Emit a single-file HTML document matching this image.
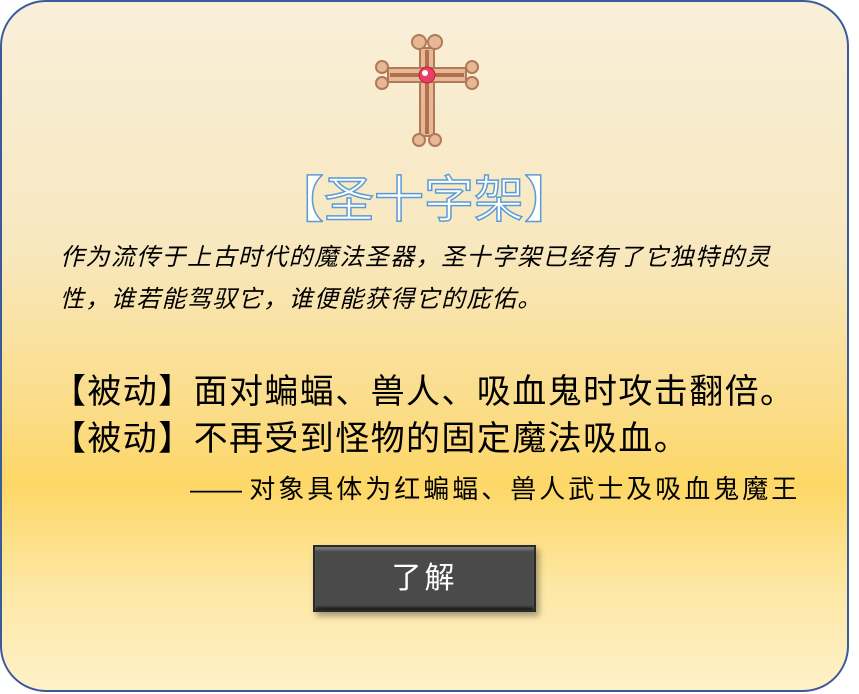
<!DOCTYPE html>
<html><head><meta charset="utf-8"><style>
body{margin:0;width:859px;height:694px;background:#fff;overflow:hidden;font-family:"Liberation Sans","Noto Sans CJK SC",sans-serif}
.panel{position:absolute;left:0;top:0;width:845px;height:688px;border:2px solid #3a5a9a;border-radius:46px;
background:linear-gradient(180deg,#f9efd9 0%,#f8e8c0 35%,#fbdc86 60%,#fdd766 70%,#fde7a4 85%,#fff1c8 100%);overflow:hidden}
.t{position:absolute;white-space:nowrap;color:#000}
.title{left:272px;top:158px;font-size:50px;color:#fff;-webkit-text-stroke:1.5px #5b9bd5;letter-spacing:0px}
.desc{left:58px;font-size:24px;font-style:italic;letter-spacing:1.4px}
.main{left:50px;font-size:34px;letter-spacing:1.4px}
.sub{left:188px;top:467px;font-size:26px}
.sub span{letter-spacing:3px}
.btn{position:absolute;left:311px;top:543px;width:219px;height:63px;background:#4a4a4a;border:2px solid #2a2a2a;
box-shadow:inset 0 3px 2px #777,inset 0 -3px 2px #222,3px 4px 6px rgba(0,0,0,.35);color:#fff;font-size:30px;text-align:center;line-height:63px;letter-spacing:3px}
</style></head><body>
<div class="panel">
<svg style="position:absolute;left:372px;top:28px" width="106" height="118" viewBox="0 0 106 118">
<g fill="#e8b896" stroke="#b07a5a" stroke-width="2">
<rect x="46" y="18" width="14" height="88"/>
<rect x="14" y="38" width="78" height="14"/>
<circle cx="45" cy="12" r="7"/><circle cx="61" cy="12" r="7"/>
<circle cx="45" cy="110" r="6"/><circle cx="61" cy="110" r="6"/>
<circle cx="8" cy="37" r="6"/><circle cx="8" cy="53" r="6"/>
<circle cx="98" cy="37" r="6"/><circle cx="98" cy="53" r="6"/>
</g>
<rect x="51" y="20" width="4" height="84" fill="#b07050"/>
<rect x="16" y="43" width="74" height="4" fill="#b07050"/>
<circle cx="53" cy="45" r="8" fill="#e84060" stroke="#c02040"/>
<circle cx="51" cy="43" r="3" fill="#fff"/>
</svg>
<div class="t title">【圣十字架】</div>
<div class="t desc" style="top:235px">作为流传于上古时代的魔法圣器，圣十字架已经有了它独特的灵</div>
<div class="t desc" style="top:277px">性，谁若能驾驭它，谁便能获得它的庇佑。</div>
<div class="t main" style="top:362px">【被动】面对蝙蝠、兽人、吸血鬼时攻击翻倍。</div>
<div class="t main" style="top:409px">【被动】不再受到怪物的固定魔法吸血。</div>
<div class="t sub">—— <span>对象具体为红蝙蝠、兽人武士及吸血鬼魔王</span></div>
<div class="btn">了解</div>
</div>
</body></html>
